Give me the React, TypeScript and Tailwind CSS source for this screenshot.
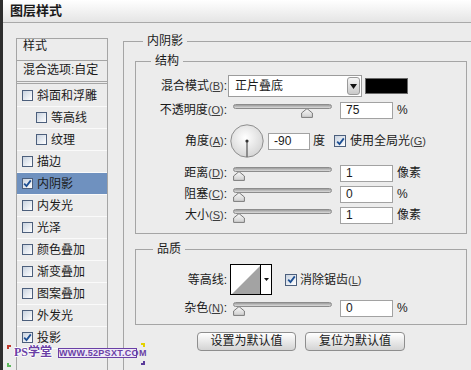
import React from 'react';

type Item = { t: string; sub?: boolean; checked?: boolean; selected?: boolean };

const items: Item[] = [
  { t: '斜面和浮雕' },
  { t: '等高线', sub: true },
  { t: '纹理', sub: true },
  { t: '描边' },
  { t: '内阴影', checked: true, selected: true },
  { t: '内发光' },
  { t: '光泽' },
  { t: '颜色叠加' },
  { t: '渐变叠加' },
  { t: '图案叠加' },
  { t: '外发光' },
  { t: '投影', checked: true },
];

const Check: React.FC<{ checked?: boolean; size?: 'sm' | 'md' }> = ({ checked, size = 'sm' }) => (
  <span
    className={
      (size === 'sm' ? 'w-[11px] h-[11px] ' : 'w-[12px] h-[12px] ') +
      'inline-flex shrink-0 items-center justify-center border border-[#4c5f7c] bg-linear-to-br from-[#c9d3e0] to-white'
    }
  >
    {checked && (
      <svg width="9" height="9" viewBox="0 0 9 9">
        <path d="M1.2 4.6 L3.5 7 L7.8 1.4" fill="none" stroke="#1d4f93" strokeWidth="1.8" />
      </svg>
    )}
  </span>
);

const Key: React.FC<{ k: string }> = ({ k }) => (
  <span className="text-[11px] text-[#3c3c3c]">
    (<u>{k}</u>)
  </span>
);

const Slider: React.FC<{ pos: number }> = ({ pos }) => (
  <div className="relative w-[99px] h-[14px] shrink-0">
    <div className="mt-[1px] h-[5px] rounded-full border border-[#8c8c8c] bg-linear-to-b from-[#9d9d9d] to-[#dcdcdc]" />
    <svg className="absolute top-[4px]" style={{ left: pos - 6 }} width="12" height="10" viewBox="0 0 12 10">
      <defs>
        <linearGradient id="th" x1="0" y1="0" x2="0" y2="1">
          <stop offset="0" stopColor="#fafafa" />
          <stop offset="1" stopColor="#cfcfcf" />
        </linearGradient>
      </defs>
      <path d="M6 0.6 L11.4 5 L11.4 9.4 L0.6 9.4 L0.6 5 Z" fill="url(#th)" stroke="#7a7a7a" strokeWidth="1" />
    </svg>
  </div>
);

const Field: React.FC<{ v: string; w?: string }> = ({ v, w = 'w-[53px]' }) => (
  <div className={w + ' h-[17px] shrink-0 border border-[#a2a2a2] bg-white pl-[5px] text-[12px] leading-[15px]'}>{v}</div>
);

const App: React.FC = () => {
  return (
    <div className="relative w-[471px] h-[370px] overflow-hidden border-l-[3px] border-[#2e2e2e] bg-[#ececec] text-[12px] text-[#1a1a1a] font-['Liberation_Sans','Noto_Sans_CJK_SC',sans-serif]">
      <div className="h-[23px] border-b border-[#a9a9a9] bg-linear-to-b from-white to-[#e5e5e5] pl-[7px] text-[13px] font-bold leading-[22px]">
        图层样式
      </div>

      <div className="flex">
        <div className="pl-[13px] pt-[15px]">
          <div className="w-[92px] h-[340px] border border-[#a5a5a5]">
            <div className="h-[22px] border-b border-[#a5a5a5] pl-[6px] leading-[15px]">样式</div>
            <div className="h-[23px] border-b-[3px] border-double border-[#a5a5a5] pl-[6px] leading-[19px]">混合选项:自定</div>
            <div className="pt-[1px]">
              {items.map((it) => (
                <div
                  key={it.t}
                  className={
                    'flex items-center gap-[4px] h-[22px] border-b border-[#fafafa] leading-[16px] ' +
                    (it.sub ? 'pl-[19px] ' : 'pl-[5px] ') +
                    (it.selected ? 'bg-[#6f91bf]' : '')
                  }
                >
                  <Check checked={it.checked} />
                  <span>{it.t}</span>
                </div>
              ))}
            </div>
          </div>
        </div>

        <div className="ml-[15px] pt-[10px]">
          <fieldset className="w-[360px] h-[360px] border border-[#a5a5a5] px-[11px]">
            <legend className="ml-[8px] px-[4px] leading-[16px]">内阴影</legend>

            <fieldset className="mt-[4px] w-[332px] border border-[#a5a5a5] pb-[9px]">
              <legend className="ml-[15px] px-[4px] leading-[16px]">结构</legend>

              <div className="mt-[6px] flex items-center h-[22px]">
                <div className="w-[91px] text-right">
                  混合模式<Key k="B" />:
                </div>
                <div className="ml-[1px] flex items-center w-[134px] h-[22px] border border-[#9c9c9c] bg-white pl-[6px] pr-[1px]">
                  <span className="flex-1">正片叠底</span>
                  <span className="flex items-center justify-center w-[13px] h-[18px] rounded-[3px] border border-[#9a9a9a] bg-linear-to-b from-[#f6f6f6] to-[#c9c9c9]">
                    <svg width="7" height="5" viewBox="0 0 7 5">
                      <path d="M0 0 H7 L3.5 5 Z" fill="#111" />
                    </svg>
                  </span>
                </div>
                <div className="ml-[3px] w-[43px] h-[16px] border border-[#6a6a6a] bg-black" />
              </div>

              <div className="mt-[4px] flex items-center h-[18px]">
                <div className="w-[91px] text-right">
                  不透明度<Key k="O" />:
                </div>
                <div className="ml-[6px]">
                  <Slider pos={74} />
                </div>
                <div className="ml-[8px]">
                  <Field v="75" />
                </div>
                <span className="ml-[4px]">%</span>
              </div>

              <div className="mt-[5px] flex items-center h-[34px]">
                <div className="w-[91px] text-right">
                  角度<Key k="A" />:
                </div>
                <svg className="ml-[3px] shrink-0" width="34" height="34" viewBox="0 0 34 34">
                  <defs>
                    <radialGradient id="dial" cx="0.45" cy="0.4" r="0.6">
                      <stop offset="0" stopColor="#ffffff" />
                      <stop offset="1" stopColor="#d6d6d6" />
                    </radialGradient>
                  </defs>
                  <circle cx="17" cy="17" r="16.2" fill="url(#dial)" stroke="#8e8e8e" strokeWidth="1" />
                  <line x1="17" y1="17" x2="17" y2="33" stroke="#6a6a6a" strokeWidth="1.4" />
                  <circle cx="17" cy="17" r="1.6" fill="#333" />
                </svg>
                <div className="ml-[4px]">
                  <Field v="-90" w="w-[42px]" />
                </div>
                <span className="ml-[3px]">度</span>
                <div className="ml-[9px] flex items-center gap-[4px]">
                  <Check checked size="md" />
                  <span>
                    使用全局光<Key k="G" />
                  </span>
                </div>
              </div>

              {[
                { l: '距离', k: 'D', v: '1', u: '像素', mt: 'mt-[6px]' },
                { l: '阻塞', k: 'C', v: '0', u: '%', mt: 'mt-[3px]' },
                { l: '大小', k: 'S', v: '1', u: '像素', mt: 'mt-[3px]' },
              ].map((r) => (
                <div key={r.l} className={r.mt + ' flex items-center h-[18px]'}>
                  <div className="w-[91px] text-right">
                    {r.l}
                    <Key k={r.k} />:
                  </div>
                  <div className="ml-[6px]">
                    <Slider pos={6} />
                  </div>
                  <div className="ml-[8px]">
                    <Field v={r.v} />
                  </div>
                  <span className="ml-[4px]">{r.u}</span>
                </div>
              ))}
            </fieldset>

            <fieldset className="mt-[7px] w-[332px] border border-[#a5a5a5] pb-[7px]">
              <legend className="ml-[17px] px-[4px] leading-[16px]">品质</legend>

              <div className="mt-[7px] flex items-center h-[31px]">
                <div className="w-[91px] text-right">等高线:</div>
                <div className="ml-[3px] flex w-[42px] h-[31px] border border-black bg-white">
                  <svg width="29" height="29" viewBox="0 0 29 29" className="shrink-0">
                    <path d="M1 29 L29 1 L29 29 Z" fill="#a3a3a3" />
                  </svg>
                  <div className="flex flex-1 items-center justify-center border-l border-black">
                    <svg width="5" height="3" viewBox="0 0 5 3">
                      <path d="M0 0 H5 L2.5 3 Z" fill="#111" />
                    </svg>
                  </div>
                </div>
                <div className="ml-[13px] flex items-center gap-[3px]">
                  <Check checked size="md" />
                  <span>
                    消除锯齿<Key k="L" />
                  </span>
                </div>
              </div>

              <div className="mt-[4px] flex items-center h-[18px]">
                <div className="w-[91px] text-right">
                  杂色<Key k="N" />:
                </div>
                <div className="ml-[6px]">
                  <Slider pos={6} />
                </div>
                <div className="ml-[8px]">
                  <Field v="0" />
                </div>
                <span className="ml-[4px]">%</span>
              </div>
            </fieldset>

            <div className="mt-[7px] flex w-[332px] justify-center gap-[9px]">
              <button className="w-[99px] h-[19px] rounded-[4px] border border-[#8e8e8e] bg-linear-to-b from-white to-[#d4d4d4] text-[12px] leading-[17px]">
                设置为默认值
              </button>
              <button className="w-[100px] h-[19px] rounded-[4px] border border-[#8e8e8e] bg-linear-to-b from-white to-[#d4d4d4] text-[12px] leading-[17px]">
                复位为默认值
              </button>
            </div>
          </fieldset>
        </div>
      </div>

      {/* watermark */}
      <div className="absolute left-[4px] top-[343px] w-[138px] h-[24px]">
        <span className="absolute left-0 top-[2px] w-[4px] h-[4px] border-l-2 border-t-2 border-[#c0392b]" />
        <span className="absolute left-0 bottom-0 w-[4px] h-[4px] border-l-2 border-b-2 border-[#5cb85c]" />
        <span className="absolute right-0 top-0 w-[4px] h-[4px] border-r-2 border-t-2 border-[#e3d200]" />
        <span className="absolute right-0 bottom-[2px] w-[4px] h-[4px] border-r-2 border-b-2 border-[#5a3a9a]" />
        <span className="absolute left-[7px] top-[2px] text-[12px] font-bold leading-[15px] text-[#6a3fa6] font-['Liberation_Serif','Noto_Sans_CJK_SC',serif] [text-shadow:1px_0_#fff,-1px_0_#fff,0_1px_#fff,0_-1px_#fff]">
          PS学堂
        </span>
        <span className="absolute left-[51px] top-[5px] w-[79px] h-[10px] border border-[#6a3fa6] bg-[#efe9f7] text-center text-[9px] font-bold leading-[8px] tracking-[0.3px] text-[#6a3fa6]">
          WWW.52PSXT.COM
        </span>
      </div>
    </div>
  );
};

export default App;
